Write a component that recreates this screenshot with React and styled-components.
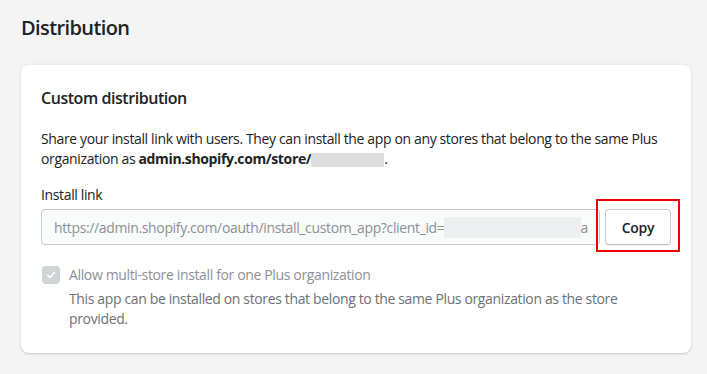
import React from "react";
import styled, { createGlobalStyle } from "styled-components";

const Global = createGlobalStyle`
  html, body { margin: 0; padding: 0; background: #f4f4f4; }
  body { font-family: "Open Sans", "Noto Sans", sans-serif; color: #202223; letter-spacing: -0.36px; -webkit-font-smoothing: antialiased; }
  * { box-sizing: border-box; }
`;

const Page = styled.div`
  padding: 14px 16px 21px 21px;
`;

const PageTitle = styled.h1`
  margin: 0 0 23px;
  font-size: 20px;
  line-height: 28px;
  font-weight: 600;
  letter-spacing: -0.6px;
  color: #202223;
`;

const Card = styled.section`
  background: #fff;
  border-radius: 8px;
  box-shadow: 0 0 5px rgba(23, 24, 24, 0.05), 0 1px 2px rgba(0, 0, 0, 0.15);
  padding: 21px 20px 24px;
  display: flex;
  flex-direction: column;
`;

const CardTitle = styled.h2`
  margin: 0 0 19px;
  font-size: 16px;
  line-height: 24px;
  font-weight: 600;
  letter-spacing: -0.45px;
`;

const Text = styled.p`
  margin: 0;
  font-size: 14px;
  line-height: 20px;
  color: ${(p) => p.$color || "#202223"};
`;

const Strong = styled.strong`
  font-weight: 700;
`;

const Redacted = styled.span`
  display: inline-block;
  vertical-align: ${(p) => p.$valign || "-3px"};
  width: ${(p) => p.$w}px;
  height: ${(p) => p.$h}px;
  background: ${(p) => p.$bg};
`;

const Field = styled.div`
  margin-top: 16px;
  display: flex;
  flex-direction: column;
  gap: 4px;
`;

const Label = styled.label`
  font-size: 14px;
  line-height: 20px;
`;

const Connected = styled.div`
  display: flex;
  align-items: stretch;
  gap: 5px;
`;

const Input = styled.div`
  flex: 1;
  height: 36px;
  border: 1px solid #c9cccf;
  border-top-color: #c4c6c9;
  border-radius: 4px;
  background: #fafbfb;
  padding: 0 11px 0 12px;
  display: flex;
  align-items: center;
  font-size: 14px;
  color: #8c9196;
  white-space: nowrap;
  overflow: hidden;
`;

const ButtonWrap = styled.div`
  position: relative;
  display: flex;
`;

const Button = styled.button`
  width: 66px;
  height: 36px;
  border: 1px solid #c9cccf;
  border-bottom-color: #babfc3;
  border-radius: 4px;
  background: #fff;
  font-family: inherit;
  font-size: 14px;
  font-weight: 600;
  letter-spacing: -0.3px;
  color: #202223;
  box-shadow: 0 1px 0 rgba(0, 0, 0, 0.05);
`;

const Highlight = styled.span`
  position: absolute;
  top: -10px;
  left: -9px;
  right: -9px;
  bottom: -7px;
  border: 2px solid #ee0000;
  pointer-events: none;
`;

const CheckRow = styled.div`
  margin-top: 20px;
  display: grid;
  grid-template-columns: 18px 1fr;
  column-gap: 9px;
  padding-left: 1px;
`;

const Box = styled.span`
  width: 18px;
  height: 18px;
  margin-top: 1px;
  border-radius: 4px;
  background: #d2d5d8;
  display: flex;
  align-items: center;
  justify-content: center;
`;

const Help = styled.div`
  grid-column: 2;
  margin-top: 4px;
`;

export default function App() {
  return (
    <>
      <Global />
      <Page>
        <PageTitle>Distribution</PageTitle>
        <Card>
          <CardTitle>Custom distribution</CardTitle>
          <Text>
            Share your install link with users. They can install the app on any stores that belong to the same Plus
            organization as <Strong>admin.shopify.com/store/</Strong>
            <Redacted $w={73} $h={14} $bg="#dedede" />.
          </Text>
          <Field>
            <Label>Install link</Label>
            <Connected>
              <Input>
                https://admin.shopify.com/oauth/install_custom_app?client_id=
                <Redacted $w={137} $h={21} $bg="#eeeff0" $valign="middle" />a
              </Input>
              <ButtonWrap>
                <Button>Copy</Button>
                <Highlight />
              </ButtonWrap>
            </Connected>
          </Field>
          <CheckRow>
            <Box>
              <svg width="12" height="12" viewBox="0 0 12 12">
                <path d="M2.5 6.2l2.3 2.3 4.7-5" fill="none" stroke="#fff" strokeWidth="1.6" strokeLinecap="round" strokeLinejoin="round" />
              </svg>
            </Box>
            <Text $color="#8c9196">Allow multi-store install for one Plus organization</Text>
            <Help>
              <Text $color="#6d7175">
                This app can be installed on stores that belong to the same Plus organization as the store provided.
              </Text>
            </Help>
          </CheckRow>
        </Card>
      </Page>
    </>
  );
}
